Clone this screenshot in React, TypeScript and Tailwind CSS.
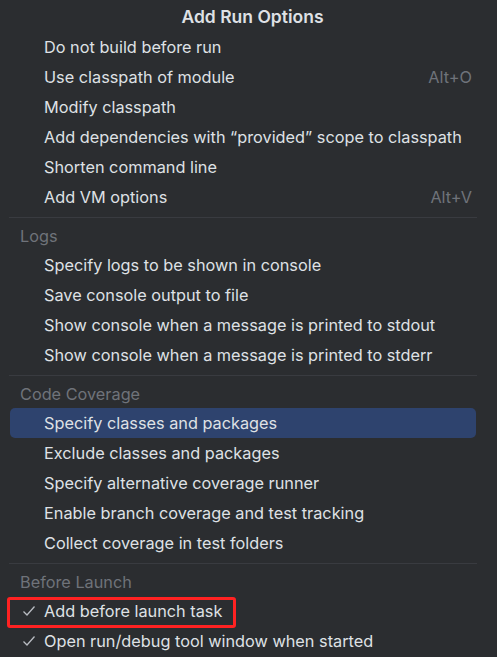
import React from 'react';

// A menu row: either a plain option, a checked option, or the highlighted one.
type Item = {
  label: string;
  shortcut?: string;
  checked?: boolean;
  selected?: boolean;
  marked?: boolean;
};

type Section = {
  title?: string;
  items: Item[];
};

const sections: Section[] = [
  {
    items: [
      { label: 'Do not build before run' },
      { label: 'Use classpath of module', shortcut: 'Alt+O' },
      { label: 'Modify classpath' },
      { label: 'Add dependencies with \u201cprovided\u201d scope to classpath' },
      { label: 'Shorten command line' },
      { label: 'Add VM options', shortcut: 'Alt+V' },
    ],
  },
  {
    title: 'Logs',
    items: [
      { label: 'Specify logs to be shown in console' },
      { label: 'Save console output to file' },
      { label: 'Show console when a message is printed to stdout' },
      { label: 'Show console when a message is printed to stderr' },
    ],
  },
  {
    title: 'Code Coverage',
    items: [
      { label: 'Specify classes and packages', selected: true },
      { label: 'Exclude classes and packages' },
      { label: 'Specify alternative coverage runner' },
      { label: 'Enable branch coverage and test tracking' },
      { label: 'Collect coverage in test folders' },
    ],
  },
  {
    title: 'Before Launch',
    items: [
      { label: 'Add before launch task', checked: true, marked: true },
      { label: 'Open run/debug tool window when started', checked: true },
    ],
  },
];

const Check = () => (
  <svg width="14" height="12" viewBox="0 0 14 12" className="absolute left-[12px] top-1/2 -translate-y-1/2">
    <path d="M1.5 6.5 L5 10 L12.5 1.5" fill="none" stroke="#b9bcc2" strokeWidth="1.3" />
  </svg>
);

const Row = ({ item }: { item: Item }) => (
  <div
    className={`relative flex h-[30px] items-center justify-between rounded-[5px] pl-[34px] pr-[4px] ${
      item.selected ? 'bg-[#2e436e]' : ''
    }`}
  >
    {item.checked && <Check />}
    <span className="text-[#dfe1e5]">{item.label}</span>
    {item.shortcut && <span className="text-[#6f737a]">{item.shortcut}</span>}
    {/* red annotation frame drawn over the row */}
    {item.marked && (
      <div className="pointer-events-none absolute left-[-3px] top-[1px] h-[31px] w-[229px] rounded-[3px] border-[3px] border-[#ff2222]" />
    )}
  </div>
);

export default function App() {
  return (
    <div
      className="h-[657px] w-[497px] overflow-hidden bg-[#2b2d30] pl-[10px] pr-[21px] text-[16.3px] leading-none"
      style={{ fontFamily: 'Inter, "Noto Sans", sans-serif' }}
    >
      <div className="flex h-[32px] items-center justify-center pl-[19px] pt-[1px] text-[17.5px] font-semibold text-[#dfe1e5]">
        Add Run Options
      </div>
      {sections.map((section, i) => (
        <div key={i}>
          {i > 0 && <div className="mx-[-1px] mb-[5px] mt-[5px] h-px bg-[#393b40]" />}
          {section.title && (
            <div className="flex h-[27px] items-center pl-[10px] text-[#6f737a]">{section.title}</div>
          )}
          {section.items.map(item => (
            <Row key={item.label} item={item} />
          ))}
        </div>
      ))}
    </div>
  );
}
